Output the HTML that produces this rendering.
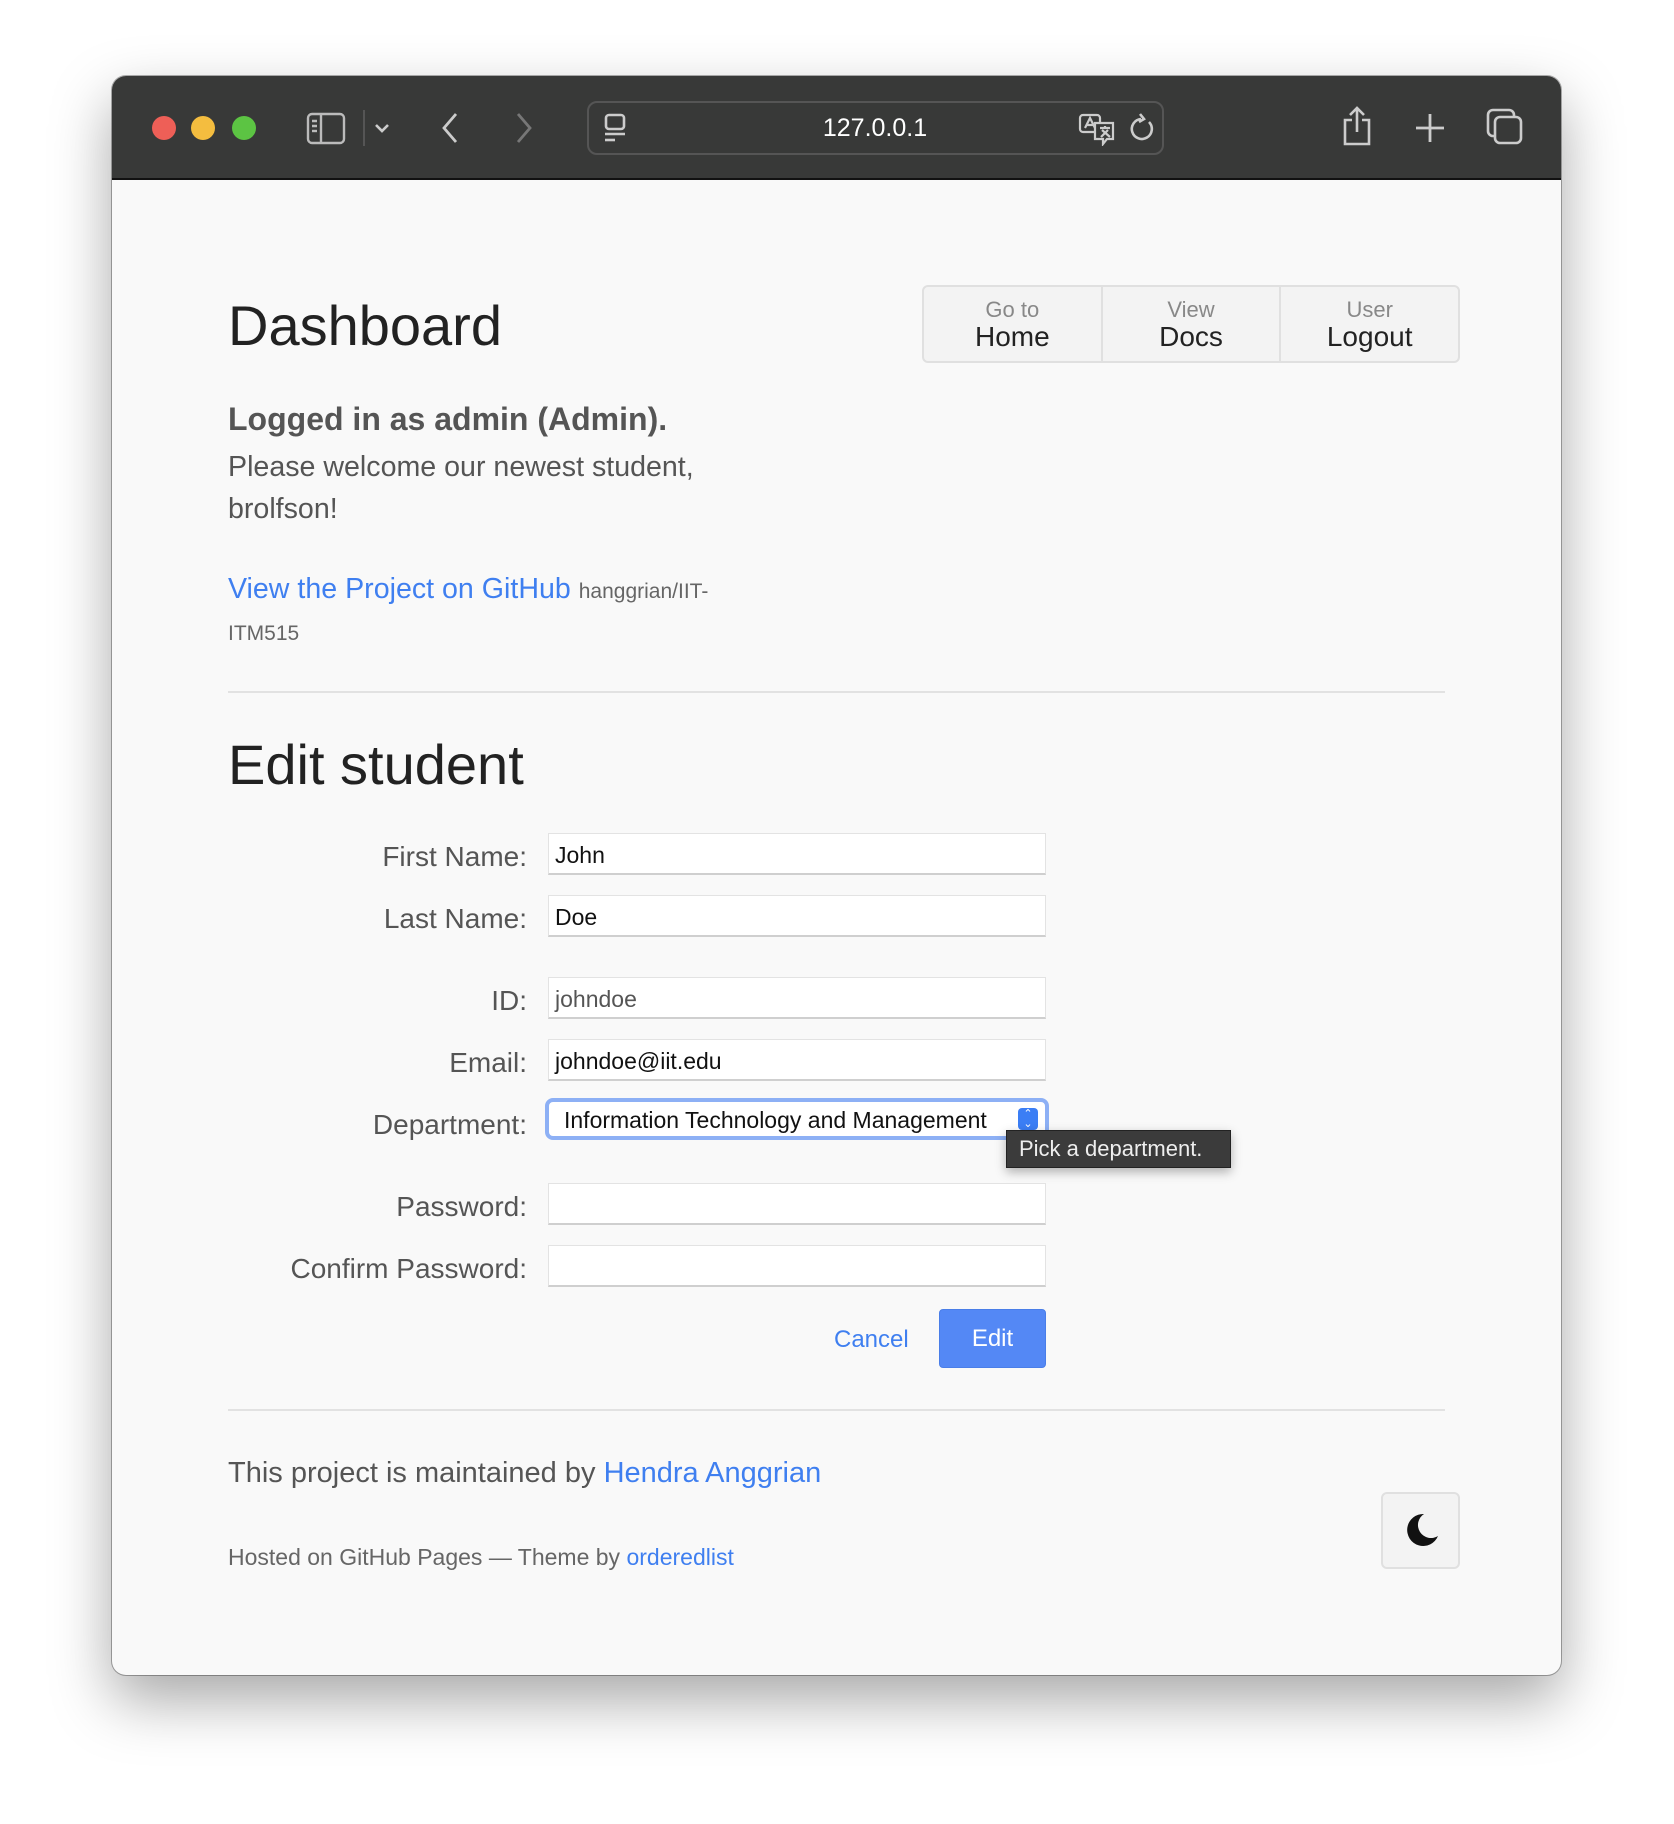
<!DOCTYPE html>
<html><head><meta charset="utf-8"><style>
*{box-sizing:border-box;margin:0;padding:0}
body{width:1674px;height:1824px;background:#fff;font-family:"Liberation Sans",sans-serif;position:relative;overflow:hidden}
.win{position:absolute;left:112px;top:76px;width:1449px;height:1599px;border-radius:14px;overflow:hidden;background:#f9f9f9;box-shadow:0 25px 60px rgba(0,0,0,.35),0 0 0 1px rgba(0,0,0,.3)}
.bar{position:absolute;left:0;top:0;width:100%;height:104px;background:#383938;border-bottom:2px solid #111}
.dot{position:absolute;top:40px;width:24px;height:24px;border-radius:50%}
.abs{position:absolute}
.t{position:absolute;white-space:nowrap}
.inp{position:absolute;left:436px;width:498px;height:42px;background:#fff;border:1px solid #e3e3e3;border-bottom:2px solid #cfcfcf;font-size:23px;color:#111;padding:8px 6px}
.lbl{position:absolute;right:1034px;font-size:28px;color:#555;text-align:right;white-space:nowrap}
.nav{position:absolute;left:810px;top:209px;width:538px;height:78px;border:2px solid #e0e0e0;border-radius:6px;background:#f3f3f3;display:flex}
.nav div{flex:1;text-align:center;border-right:2px solid #e0e0e0;padding-top:12px;line-height:1}
.nav div:last-child{border-right:none}
.nav small{display:block;font-size:22px;color:#888}
.nav b{display:block;font-size:28px;color:#222;font-weight:normal;margin-top:2px}
a{color:#3f7ff0;text-decoration:none}
</style></head><body>
<div class="win">
<div class="bar">
<div class="dot" style="left:40px;background:#ee5f57"></div>
<div class="dot" style="left:79px;background:#f4bd3f"></div>
<div class="dot" style="left:120px;background:#5cc443"></div>
<svg class="abs" style="left:190px;top:34px" width="60" height="40" fill="none" stroke="#bbb" stroke-width="2.4"><rect x="6" y="4" width="36" height="29" rx="4"/><line x1="19" y1="4" x2="19" y2="33"/><line x1="10" y1="11" x2="15" y2="11"/><line x1="10" y1="16" x2="15" y2="16"/><line x1="10" y1="21" x2="15" y2="21"/></svg>
<div class="abs" style="left:251px;top:34px;width:2px;height:36px;background:#555"></div>
<svg class="abs" style="left:260px;top:42px" width="20" height="20" fill="none" stroke="#ccc" stroke-width="2.6"><path d="M4 7l6 6 6-6"/></svg>
<svg class="abs" style="left:324px;top:34px" width="30" height="36" fill="none" stroke="#ccc" stroke-width="2.8"><path d="M20 4L8 18l12 14"/></svg>
<svg class="abs" style="left:396px;top:34px" width="30" height="36" fill="none" stroke="#777" stroke-width="2.8"><path d="M10 4l12 14-12 14"/></svg>
<div class="abs" style="left:475px;top:25px;width:577px;height:54px;border:2px solid #555;border-radius:10px"></div>
<svg class="abs" style="left:489px;top:36px" width="30" height="34" fill="none" stroke="#ccc" stroke-width="2.6"><rect x="5" y="3" width="18" height="14" rx="3"/><line x1="4" y1="22" x2="24" y2="22"/><line x1="4" y1="28" x2="14" y2="28"/></svg>
<div class="t" style="left:650px;top:38px;width:226px;text-align:center;font-size:25px;color:#fff">127.0.0.1</div>
<svg class="abs" style="left:965px;top:36px" width="44" height="34" fill="none" stroke="#ccc" stroke-width="2.2"><rect x="3" y="3" width="20" height="17" rx="3"/><path d="M8 16l5-10 5 10M10 13h6"/><path d="M18 11h18v16H30l-4 5v-5h-8z" fill="#383938"/><path d="M23 16h10M28 14v2M25 18l8 7M31 18l-7 7"/></svg>
<svg class="abs" style="left:1015px;top:36px" width="30" height="34" fill="none" stroke="#ccc" stroke-width="2.6"><path d="M22 10a10 10 0 1 1-8-3"/><path d="M13 2l4 5-5 3"/></svg>
<svg class="abs" style="left:1227px;top:28px" width="36" height="44" fill="none" stroke="#ccc" stroke-width="2.6"><path d="M13 16H6v24h24V16h-7"/><path d="M18 4v24M11 11l7-7 7 7"/></svg>
<svg class="abs" style="left:1300px;top:34px" width="36" height="36" fill="none" stroke="#ccc" stroke-width="2.8"><path d="M18 4v28M4 18h28"/></svg>
<svg class="abs" style="left:1372px;top:30px" width="40" height="42" fill="none" stroke="#ccc" stroke-width="2.6"><rect x="4" y="4" width="26" height="26" rx="5"/><rect x="11" y="11" width="26" height="26" rx="5" fill="#383938"/></svg>
</div>

<div class="t" style="left:116px;top:217px;font-size:56px;color:#222">Dashboard</div>
<div class="nav"><div><small>Go to</small><b>Home</b></div><div><small>View</small><b>Docs</b></div><div><small>User</small><b>Logout</b></div></div>

<div class="t" style="left:116px;top:325px;font-size:32px;font-weight:bold;color:#555">Logged in as admin (Admin).</div>
<div class="t" style="left:116px;top:370px;font-size:28.6px;color:#555;line-height:42px">Please welcome our newest student,<br>brolfson!</div>
<div class="t" style="left:116px;top:497px;font-size:28.6px"><a>View the Project on GitHub</a> <span style="font-size:21px;color:#666">hanggrian/IIT-</span></div>
<div class="t" style="left:116px;top:546px;font-size:21px;color:#666">ITM515</div>
<div class="abs" style="left:116px;top:615px;width:1217px;height:2px;background:#e2e2e2"></div>

<div class="t" style="left:116px;top:656px;font-size:56px;color:#222">Edit student</div>

<div class="lbl" style="top:765px">First Name:</div><div class="inp" style="top:757px">John</div>
<div class="lbl" style="top:827px">Last Name:</div><div class="inp" style="top:819px">Doe</div>
<div class="lbl" style="top:909px">ID:</div><div class="inp" style="top:901px;color:#555">johndoe</div>
<div class="lbl" style="top:971px">Email:</div><div class="inp" style="top:963px">johndoe@iit.edu</div>
<div class="lbl" style="top:1033px">Department:</div>
<div class="abs" style="left:433px;top:1022px;width:504px;height:42px;border:4px solid #8db0f5;border-radius:8px;background:#fff;font-size:23px;color:#111;padding:5px 15px">Information Technology and Management</div>
<div class="abs" style="left:906px;top:1032px;width:20px;height:22px;background:#3b7ef5;border-radius:4px;color:#fff;font-size:11px;line-height:10px;text-align:center;padding-top:1px">⌃<br>⌄</div>
<div class="t" style="left:894px;top:1054px;width:225px;height:38px;background:#3b3b3b;border:1px solid #222;color:#eee;font-size:22px;padding:5px 12px;box-shadow:0 4px 10px rgba(0,0,0,.3)">Pick a department.</div>
<div class="lbl" style="top:1115px">Password:</div><div class="inp" style="top:1107px"></div>
<div class="lbl" style="top:1177px">Confirm Password:</div><div class="inp" style="top:1169px"></div>

<div class="t" style="left:722px;top:1250px;font-size:24px;color:#3f7ff0">Cancel</div>
<div class="abs" style="left:827px;top:1233px;width:107px;height:59px;background:#5488f5;border-radius:4px;border:1px solid #4a7ee8;color:#fff;font-size:24px;text-align:center;line-height:57px">Edit</div>

<div class="abs" style="left:116px;top:1333px;width:1217px;height:2px;background:#e2e2e2"></div>
<div class="t" style="left:116px;top:1381px;font-size:29px;color:#555">This project is maintained by <a>Hendra Anggrian</a></div>
<div class="t" style="left:116px;top:1468px;font-size:23px;color:#666">Hosted on GitHub Pages — Theme by <a>orderedlist</a></div>
<div class="abs" style="left:1269px;top:1416px;width:79px;height:77px;border:2px solid #e0e0e0;border-radius:6px;background:#f3f3f3"></div>
<svg class="abs" style="left:1288px;top:1434px" width="42" height="42"><path d="M24 4a16 16 0 1 0 14 22A13 13 0 0 1 24 4z" fill="#111"/></svg>
</div>
</body></html>
